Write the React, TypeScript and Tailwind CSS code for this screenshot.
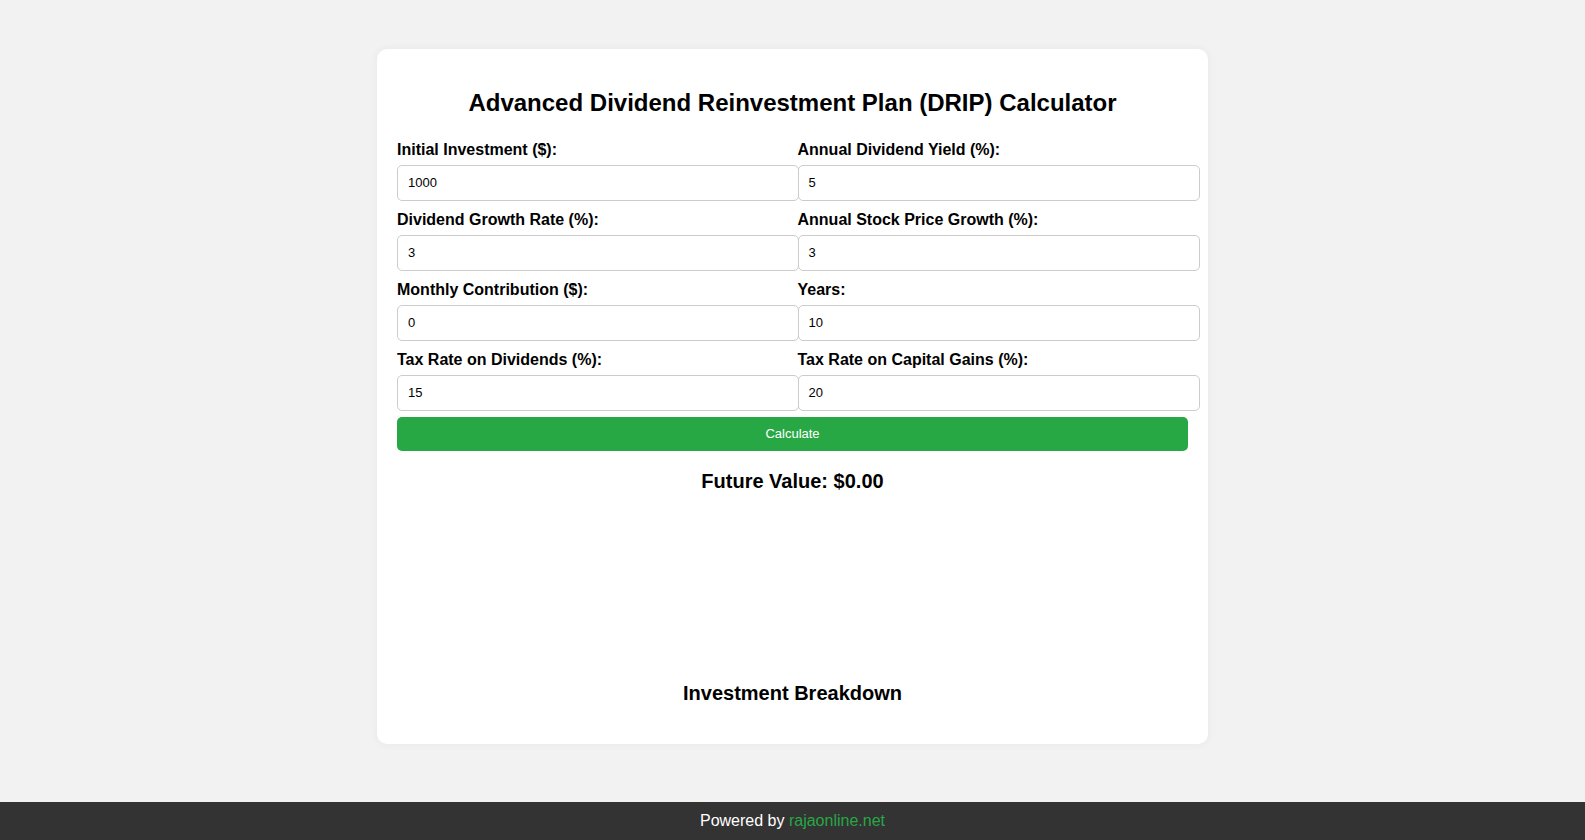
export default function App() {
  const fields: [string, string][] = [
    ["Initial Investment ($):", "1000"],
    ["Annual Dividend Yield (%):", "5"],
    ["Dividend Growth Rate (%):", "3"],
    ["Annual Stock Price Growth (%):", "3"],
    ["Monthly Contribution ($):", "0"],
    ["Years:", "10"],
    ["Tax Rate on Dividends (%):", "15"],
    ["Tax Rate on Capital Gains (%):", "20"],
  ];
  return (
    <div className="min-h-[840px] bg-[#f2f2f2] flex flex-col text-black" style={{ fontFamily: '"Liberation Sans", Arial, sans-serif' }}>
      <div className="flex-1 pt-[49px] pb-[49px] flex justify-center">
        <div className="w-[831px] bg-white rounded-[10px] px-5 pt-[30px] pb-[30px] h-[695px] shadow-[0_0_10px_rgba(0,0,0,0.05)]">
          <h1 className="text-[24px] font-bold text-center leading-[28px] mt-[10px] mb-[24px]">Advanced Dividend Reinvestment Plan (DRIP) Calculator</h1>
          <div className="grid grid-cols-2 gap-x-[10px]">
            {fields.map(([l, v]) => (
              <div key={l} className="flex flex-col">
                <label className="text-[16px] font-bold leading-[18px] mb-[6px]">{l}</label>
                <div className="w-[402px] h-[36px] border border-[#ccc] rounded-[5px] px-[10px] flex items-center text-[13px] mb-[10px]">{v}</div>
              </div>
            ))}
          </div>
          <button className="w-full h-[34px] bg-[#28a745] text-white text-[13px] rounded-[5px] -mt-[5px]">Calculate</button>
          <div className="text-[20px] font-bold text-center mt-[18px] leading-[24px]">Future Value: $0.00</div>
          <div className="h-[188px]" />
          <div className="text-[20px] font-bold text-center leading-[24px]">Investment Breakdown</div>
        </div>
      </div>
      <div className="bg-[#333] text-white text-center text-[16px] h-[38px] flex items-center justify-center">
        <span>Powered by <span className="text-[#28a745]">rajaonline.net</span></span>
      </div>
    </div>
  );
}
